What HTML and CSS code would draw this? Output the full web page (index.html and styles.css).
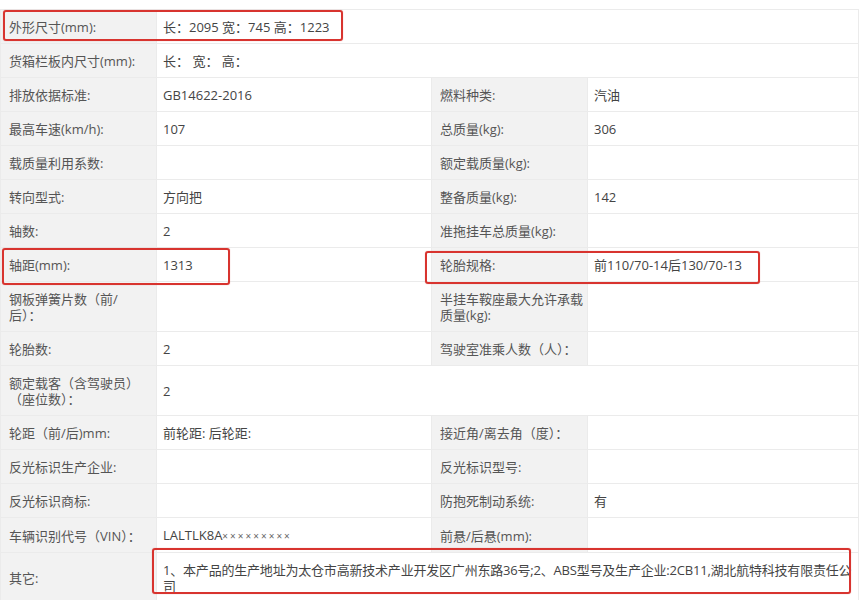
FILE: index.html
```html
<!DOCTYPE html>
<html lang="zh-CN">
<head>
<meta charset="utf-8">
<link rel="stylesheet" href="styles.css">
</head>
<body>
<div class="wrap">
<table class="spec">
<colgroup><col class="c-l1"><col class="c-v1"><col class="c-l2"><col class="c-v2"></colgroup>
<tr><td class="lab">外形尺寸(mm):</td><td colspan="3">长：2095 宽：745 高：1223</td></tr>
<tr><td class="lab">货箱栏板内尺寸(mm):</td><td colspan="3">长： 宽： 高：</td></tr>
<tr><td class="lab">排放依据标准:</td><td>GB14622-2016</td><td class="lab">燃料种类:</td><td>汽油</td></tr>
<tr><td class="lab">最高车速(km/h):</td><td>107</td><td class="lab">总质量(kg):</td><td>306</td></tr>
<tr><td class="lab">载质量利用系数:</td><td></td><td class="lab">额定载质量(kg):</td><td></td></tr>
<tr><td class="lab">转向型式:</td><td>方向把</td><td class="lab">整备质量(kg):</td><td>142</td></tr>
<tr><td class="lab">轴数:</td><td>2</td><td class="lab">准拖挂车总质量(kg):</td><td></td></tr>
<tr><td class="lab">轴距(mm):</td><td>1313</td><td class="lab">轮胎规格:</td><td>前110/70-14后130/70-13</td></tr>
<tr><td class="lab">钢板弹簧片数（前/<br>后）：</td><td></td><td class="lab">半挂车鞍座最大允许承载质量(kg):</td><td></td></tr>
<tr><td class="lab">轮胎数:</td><td>2</td><td class="lab">驾驶室准乘人数（人）：</td><td></td></tr>
<tr><td class="lab">额定载客（含驾驶员）（座位数）：</td><td colspan="3">2</td></tr>
<tr><td class="lab">轮距（前/后)mm:</td><td>前轮距: 后轮距:</td><td class="lab">接近角/离去角（度）：</td><td></td></tr>
<tr><td class="lab">反光标识生产企业:</td><td></td><td class="lab">反光标识型号:</td><td></td></tr>
<tr><td class="lab">反光标识商标:</td><td></td><td class="lab">防抱死制动系统:</td><td>有</td></tr>
<tr><td class="lab">车辆识别代号（VIN）：</td><td>LALTLK8A<span class="x">×××××××××</span></td><td class="lab">前悬/后悬(mm):</td><td></td></tr>
<tr><td class="lab">其它:</td><td colspan="3" class="other">1、本产品的生产地址为太仓市高新技术产业开发区广州东路36号;2、ABS型号及生产企业:2CB11,湖北航特科技有限责任公<br>司</td></tr>
</table>
<div class="mark m1"></div>
<div class="mark m2"></div>
<div class="mark m3"></div>
<div class="mark m4"></div>
</div>
</body>
</html>
```

FILE: styles.css
```css
html, body {
  margin: 0;
  padding: 0;
  background: #fff;
}
.wrap {
  position: relative;
  padding-top: 9px;
  width: 861px;
  height: 600px;
  overflow: hidden;
  box-sizing: border-box;
}
.spec {
  border-collapse: collapse;
  table-layout: fixed;
  width: 858px;
  font-family: "Open Sans", "Noto Sans CJK SC", sans-serif;
  font-size: 13px;
  color: #444;
}
.c-l1 { width: 156px; }
.c-v1 { width: 275px; }
.c-l2 { width: 156px; }
.c-v2 { width: 271px; }
.spec td {
  border: 1px solid #ebebeb;
  padding: 9px 4px 8px 6px;
  line-height: 16px;
  vertical-align: middle;
  word-break: normal;
}
.spec td.lab {
  background: #f2f2f2;
  color: #555;
  padding-left: 8px;
}
.spec td.other {
  padding-right: 0;
  letter-spacing: -0.2px;
  white-space: nowrap;
}
.x {
  font-size: 10px;
  letter-spacing: 2px;
  color: #666;
}
.mark {
  position: absolute;
  border: 2px solid #d8342f;
  border-radius: 3px;
  box-shadow: 0 0 1px rgba(200, 40, 40, 0.5);
}
.m1 { left: 3px; top: 10px; width: 336px; height: 27px; }
.m2 { left: 2px; top: 248px; width: 224px; height: 33px; }
.m3 { left: 425px; top: 251px; width: 331px; height: 29px; }
.m4 { left: 152px; top: 548px; width: 695px; height: 42px; }
```
